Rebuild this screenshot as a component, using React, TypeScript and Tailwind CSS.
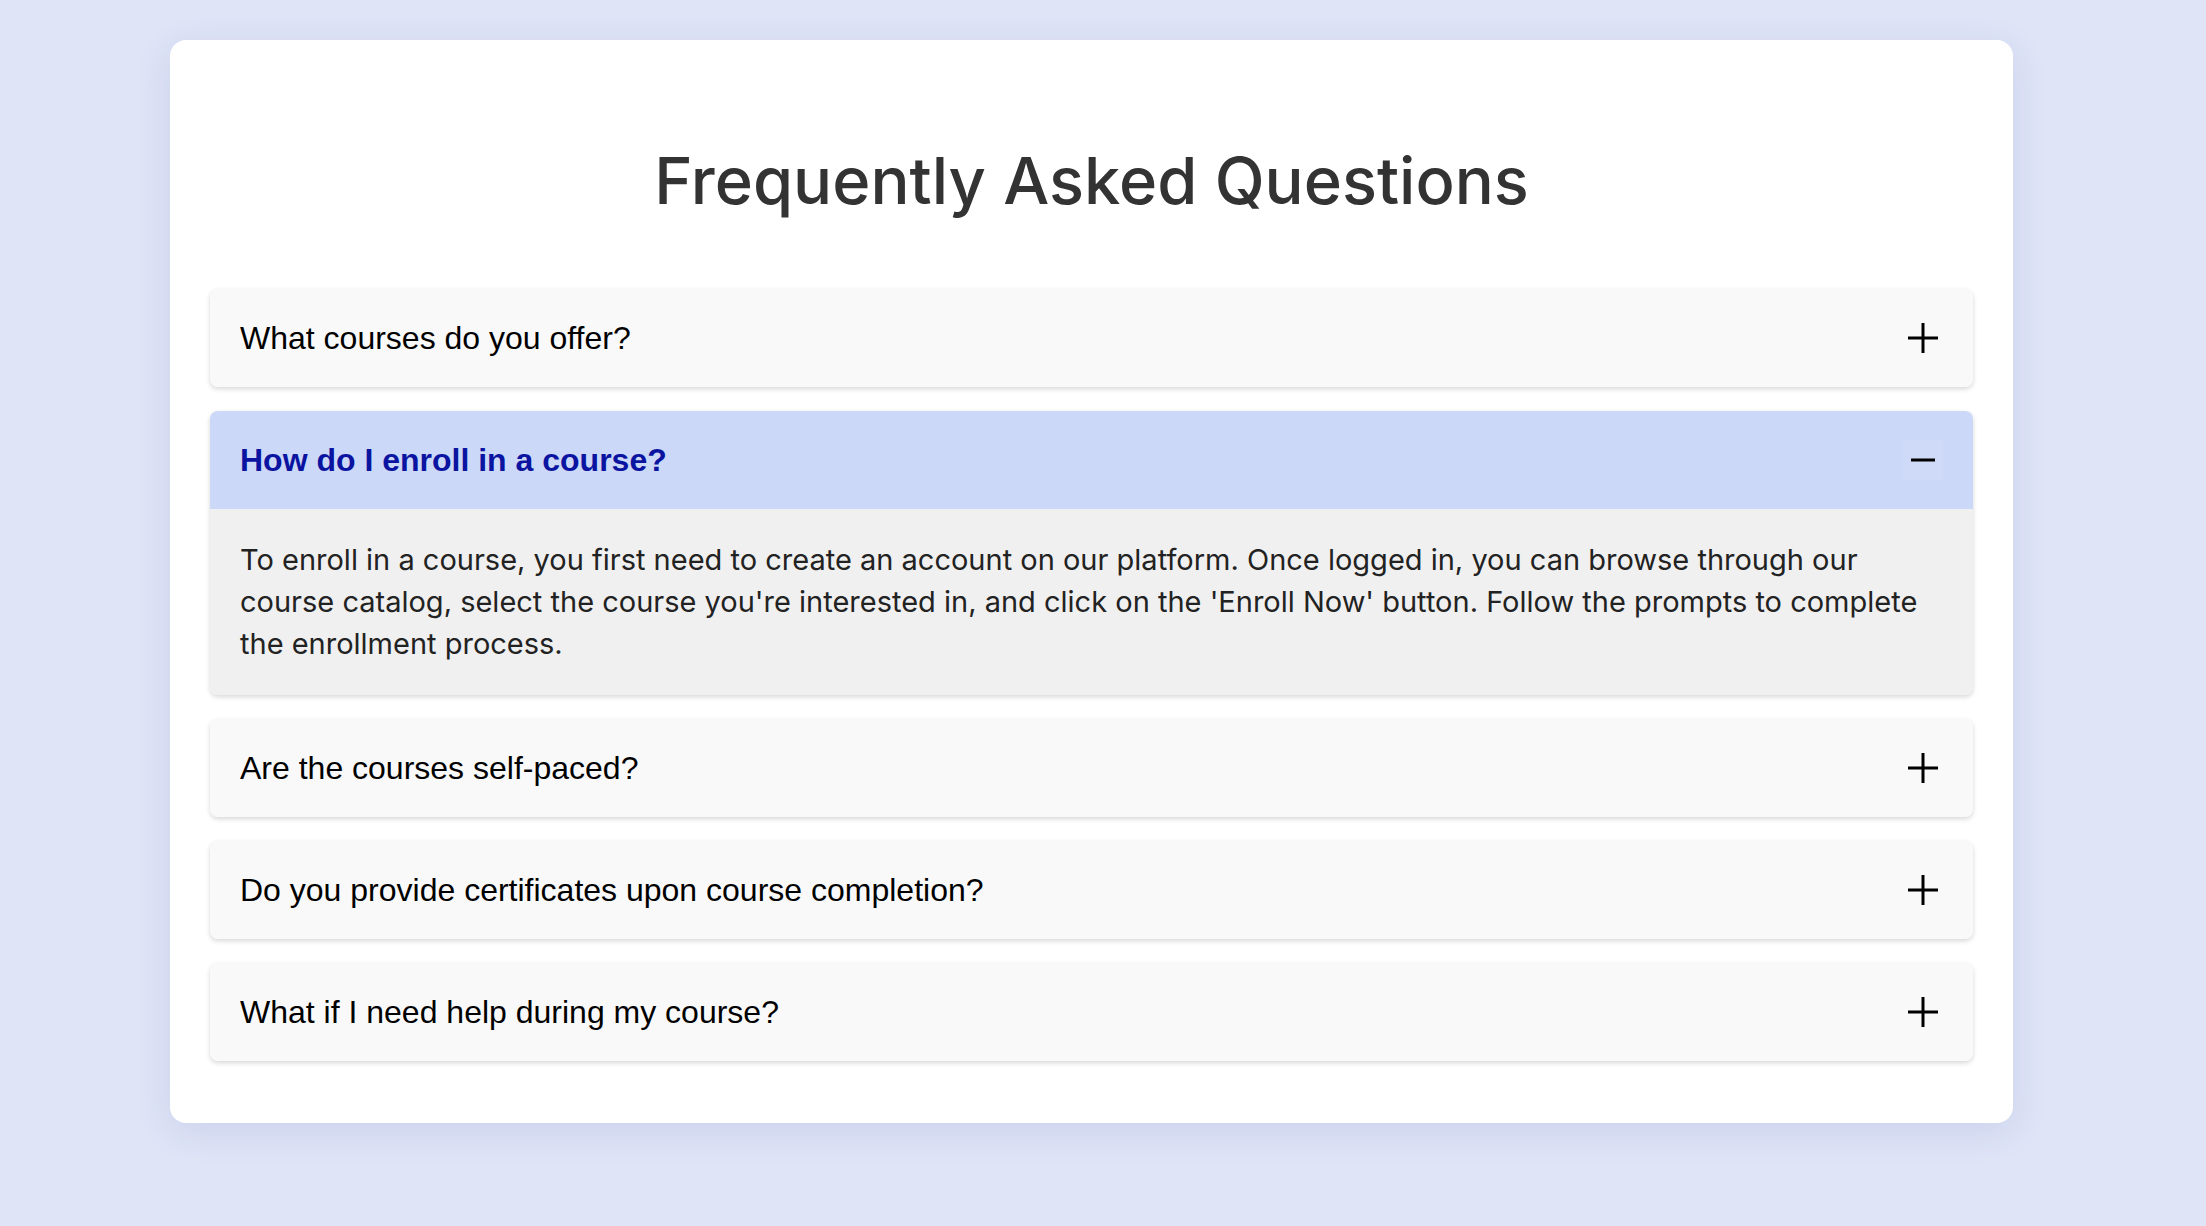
import { useState } from "react";

const FAQS = [
  {
    q: "What courses do you offer?",
    a: "We offer a wide range of courses covering programming, design, business, marketing and more. New courses are added regularly.",
  },
  {
    q: "How do I enroll in a course?",
    a: "To enroll in a course, you first need to create an account on our platform. Once logged in, you can browse through our course catalog, select the course you're interested in, and click on the 'Enroll Now' button. Follow the prompts to complete the enrollment process.",
  },
  {
    q: "Are the courses self-paced?",
    a: "Yes, most of our courses are self-paced, so you can learn whenever it suits you.",
  },
  {
    q: "Do you provide certificates upon course completion?",
    a: "Yes, you receive a certificate of completion once you finish all the lessons and assessments of a course.",
  },
  {
    q: "What if I need help during my course?",
    a: "Our support team and community forums are available to help you at any time during your course.",
  },
];

function PlusIcon() {
  return (
    <svg width="32" height="32" viewBox="0 0 32 32" fill="none">
      <path d="M16 1v30M1 16h30" stroke="#000" strokeWidth="3" />
    </svg>
  );
}

function MinusIcon() {
  return (
    <svg width="24" height="4" viewBox="0 0 24 4" fill="none">
      <path d="M0 2h24" stroke="#000" strokeWidth="3" />
    </svg>
  );
}

export default function App() {
  const [open, setOpen] = useState<number | null>(1);

  return (
    <div className="min-h-screen bg-[#dfe4f7] pt-[40px] pl-[170px] pb-[103px]">
      <div className="w-[1843px] bg-white rounded-[16px] shadow-[0_8px_36px_rgba(40,60,140,0.11)] px-[40px] pt-[40px] pb-[62px]">
        {/* ── Title ── */}
        <h1
          className="mt-[62px] mb-[70px] text-center text-[65px] leading-[77px] font-medium text-[#333]"
          style={{ fontFamily: "Inter, 'Noto Sans', sans-serif" }}
        >
          Frequently Asked Questions
        </h1>

        {/* ── Accordion ── */}
        <div className="flex flex-col gap-[24px]">
          {FAQS.map((item, i) => {
            const isOpen = open === i;
            return (
              <div
                key={item.q}
                className="rounded-[8px] overflow-hidden bg-[#f9f9f9] shadow-[0_2px_5px_rgba(0,0,0,0.16)]"
              >
                <button
                  onClick={() => setOpen(isOpen ? null : i)}
                  className={
                    "w-full flex items-center justify-between px-[30px] py-[30px] text-left text-[32px] leading-[38px] " +
                    (isOpen ? "bg-[#ccd8f8] text-[#0a14a0] font-bold" : "bg-[#f9f9f9] text-black font-normal")
                  }
                  style={{ fontFamily: "'Liberation Sans', Arial, sans-serif" }}
                >
                  <span>{item.q}</span>
                  <span
                    className={
                      "w-[40px] h-[40px] -my-[1px] flex items-center justify-center rounded-[4px] " +
                      (isOpen ? "bg-white/5" : "")
                    }
                  >
                    {isOpen ? <MinusIcon /> : <PlusIcon />}
                  </span>
                </button>
                {isOpen && (
                  <div
                    className="bg-[#f0f0f0] px-[30px] py-[30px] text-[29px] leading-[42px] text-[#222]"
                    style={{ fontFamily: "Inter, 'Noto Sans', sans-serif" }}
                  >
                    {item.a}
                  </div>
                )}
              </div>
            );
          })}
        </div>
      </div>
    </div>
  );
}
